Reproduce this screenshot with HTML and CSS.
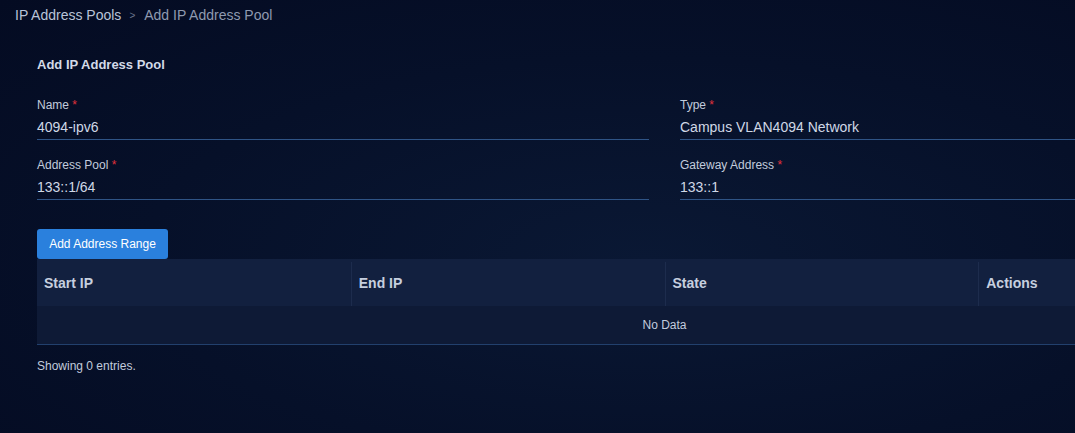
FILE: index.html
```html
<!DOCTYPE html>
<html>
<head>
<meta charset="utf-8">
<link rel="stylesheet" href="styles.css">
</head>
<body>
<div class="page">
  <nav class="breadcrumb">
    <span class="crumb-link">IP Address Pools</span>
    <span class="crumb-sep">&gt;</span>
    <span class="crumb-current">Add IP Address Pool</span>
  </nav>
  <main class="panel">
    <h1 class="title">Add IP Address Pool</h1>
    <div class="form-grid">
      <div class="field">
        <label class="label">Name <span class="req">*</span></label>
        <div class="value">4094-ipv6</div>
      </div>
      <div class="field">
        <label class="label">Type <span class="req">*</span></label>
        <div class="value">Campus VLAN4094 Network</div>
      </div>
      <div class="field">
        <label class="label">Address Pool <span class="req">*</span></label>
        <div class="value">133::1/64</div>
      </div>
      <div class="field">
        <label class="label">Gateway Address <span class="req">*</span></label>
        <div class="value">133::1</div>
      </div>
    </div>
    <button class="btn-primary">Add Address Range</button>
    <div class="table">
      <div class="thead">
        <div class="th">Start IP</div>
        <div class="th">End IP</div>
        <div class="th">State</div>
        <div class="th">Actions</div>
      </div>
      <div class="empty-row">No Data</div>
    </div>
    <div class="footer-note">Showing 0 entries.</div>
  </main>
</div>
</body>
</html>
```
FILE: styles.css
```css
html, body {
  margin: 0;
  padding: 0;
}
body {
  width: 1075px;
  height: 433px;
  overflow: hidden;
  background: radial-gradient(ellipse at 60% 60%, #0a1834 0%, #061029 55%, #040b22 100%);
  font-family: "Liberation Sans", Arial, sans-serif;
  color: #c9d2e3;
}
.page {
  padding: 5px 0 0 15px;
}
.breadcrumb {
  display: flex;
  align-items: center;
  height: 20px;
  font-size: 14px;
}
.crumb-link {
  color: #b9c4d8;
}
.crumb-sep {
  color: #6b778e;
  font-size: 10px;
  margin: 0 9px 0 8px;
}
.crumb-current {
  color: #8f9ab0;
}
.panel {
  width: 1255px;
  padding: 32px 0 0 22px;
}
.title {
  margin: 0;
  font-size: 13px;
  font-weight: bold;
  color: #d3dae7;
  line-height: 16px;
}
.form-grid {
  display: grid;
  grid-template-columns: 612px 612px;
  column-gap: 31px;
  row-gap: 18px;
  margin-top: 25px;
}
.field {
  display: flex;
  flex-direction: column;
}
.label {
  font-size: 12px;
  line-height: 14px;
  color: #c2cbdc;
}
.req {
  color: #e2313b;
}
.value {
  font-size: 14px;
  line-height: 16px;
  color: #d0d8e6;
  padding: 7px 0 4px;
  border-bottom: 1px solid #2f5486;
}
.btn-primary {
  display: block;
  margin-top: 29px;
  height: 30px;
  width: 131px;
  border: none;
  border-radius: 3px;
  background: #2a80dd;
  color: #ffffff;
  font-family: "Liberation Sans", Arial, sans-serif;
  font-size: 12px;
  padding: 0;
}
.table {
  width: 1255px;
}
.thead {
  display: grid;
  grid-template-columns: repeat(4, 1fr);
  background: #12203f;
  height: 47px;
}
.th {
  display: flex;
  align-items: center;
  padding-left: 7px;
  font-size: 14px;
  font-weight: bold;
  color: #c6cfdf;
  border-left: 1px solid #1d2c4d;
  margin-top: 3px;
  padding-bottom: 2px;
}
.th:first-child {
  border-left: none;
}
.empty-row {
  height: 38px;
  display: flex;
  align-items: center;
  justify-content: center;
  background: #0e1a36;
  font-size: 12px;
  color: #c2cbdc;
  border-bottom: 1px solid #22406d;
}
.footer-note {
  margin-top: 14px;
  font-size: 12px;
  color: #c2cbdc;
}
```
